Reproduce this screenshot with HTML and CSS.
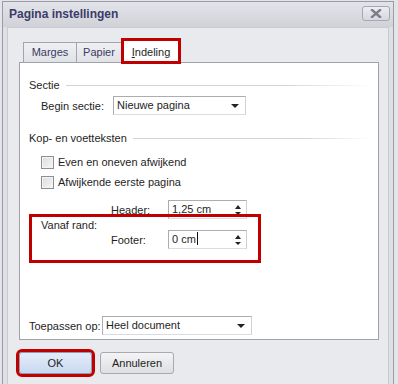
FILE: index.html
```html
<!DOCTYPE html>
<html lang="nl">
<head>
  <meta charset="UTF-8" />
  <title>Pagina instellingen</title>
  <link rel="stylesheet" href="styles.css">
</head>
<body>

  <div class="dialog">
    <div class="titlebar">
      <span class="title">Pagina instellingen</span>
      <button class="close">
        <svg width="12" height="9" viewBox="0 0 12 9"><path d="M2 1 L10 8 M10 1 L2 8" stroke="#7b7e89" stroke-width="2.4" stroke-linecap="square"/></svg>
      </button>
    </div>

    <div class="content">
      <div class="tabs">
        <div class="tab tab-marges">Marges</div>
        <div class="tab tab-papier">Papier</div>
        <div class="tab tab-indeling active"><u>I</u>ndeling</div>
      </div>

      <div class="panel">
        <div class="group-title"><span>Sectie</span></div>
        <div class="row indent begin-row">
          <label class="lbl-begin">Begin sectie:</label>
          <div class="select select-begin">Nieuwe pagina<span class="arrow"></span></div>
        </div>

        <div class="group-title kop"><span>Kop- en voetteksten</span></div>
        <label class="check indent check-1"><span class="box"></span>Even en oneven afwijkend</label>
        <label class="check indent check-2"><span class="box"></span>Afwijkende eerste pagina</label>

        <div class="offsets indent">
          <span class="vanaf">Vanaf rand:</span>
          <span class="lbl-off">Header:</span>
          <div class="spin">1,25 cm<span class="up"></span><span class="down"></span></div>
          <span class="lbl-off">Footer:</span>
          <div class="spin">0 cm<span class="caret"></span><span class="up"></span><span class="down"></span></div>
        </div>

        <div class="row apply-row">
          <label class="lbl-apply">Toepassen op:</label>
          <div class="select select-apply">Heel document<span class="arrow"></span></div>
        </div>
      </div>

      <div class="buttons">
        <button class="btn btn-ok">OK</button>
        <button class="btn">Annuleren</button>
      </div>
    </div>
  </div>

</body>
</html>
```

FILE: styles.css
```css
body {
  margin: 0;
  background: #e3e5ea;
  font-family: 'Liberation Sans', Arial, sans-serif;
  font-size: 11px;
  color: #1e1e1e;
  height: 384px;
  overflow: hidden;
}
.dialog {
  margin: 1px 0 0 2px;
  width: 392px;
  height: 383px;
  box-sizing: border-box;
  border: 1px solid #9a9ba6;
  border-bottom: none;
  background: #dfe0e5;
  padding: 0 4px;
  display: flex;
  flex-direction: column;
}
.titlebar {
  height: 25px;
  flex-shrink: 0;
  display: flex;
  justify-content: space-between;
  align-items: flex-start;
  margin: 0 -4px;
  padding: 0 3px 0 6px;
  background: linear-gradient(#e3e4e9, #d0d2d8);
}
.title {
  font-size: 12px;
  font-weight: bold;
  color: #3b3c6a;
  line-height: 25px;
}
.close {
  margin-top: 4px;
  width: 28px;
  height: 15px;
  padding: 0;
  border: 1px solid #a7a9b2;
  border-radius: 3px;
  background: linear-gradient(#eceef1, #d6d8de);
  display: flex;
  justify-content: center;
  align-items: center;
}
.content {
  flex: 1;
  border: 1px solid #c9cad1;
  border-bottom: none;
  background: #e9eaee;
  padding: 11px 9px 0 11px;
}

/* tabs */
.tabs {
  display: flex;
  align-items: flex-end;
  margin-left: 4px;
  height: 23px;
}
.tab {
  box-sizing: border-box;
  height: 20px;
  border: 1px solid #a3a4ad;
  border-bottom: none;
  background: linear-gradient(#f0f0f3, #e1e2e7);
  color: #3a3b62;
  text-align: center;
  line-height: 19px;
}
.tab-marges { width: 54px; }
.tab-papier { width: 45px; border-left: none; }
.tab-indeling { width: 58px; }
.tab.active {
  height: 24px;
  margin-bottom: -1px;
  background: #fff;
  color: #1e1e1e;
  line-height: 25px;
  position: relative;
  z-index: 1;
  outline: 3px solid #c00000;
  outline-offset: -2px;
}

.panel {
  width: 360px;
  height: 278px;
  box-sizing: border-box;
  border: 1px solid #a0a2aa;
  background: #fff;
  padding: 15px 0 4px 9px;
  display: flex;
  flex-direction: column;
}
.group-title {
  display: flex;
  align-items: center;
  line-height: 14px;
  margin-right: 6px;
}
.group-title::after {
  content: "";
  flex: 1;
  height: 1px;
  margin-left: 6px;
  background: linear-gradient(90deg, #d2d3d6 70%, #fff);
}
.group-title.kop { margin-top: 16px; }
.indent { margin-left: 12px; }

.row {
  display: flex;
  align-items: center;
}
.begin-row { margin-top: 4px; }
.lbl-begin { width: 72px; }
.lbl-apply { width: 73px; }
.apply-row { margin-top: auto; }

.select {
  box-sizing: border-box;
  height: 19px;
  border: 1px solid #abadb3;
  border-right-color: #cfd1d6;
  border-bottom-color: #dadce2;
  padding-left: 3px;
  line-height: 17px;
  position: relative;
}
.select-begin { width: 133px; }
.select-apply { width: 150px; }
.arrow {
  position: absolute;
  right: 6px;
  top: 7px;
  border-left: 4px solid transparent;
  border-right: 4px solid transparent;
  border-top: 4px solid #222;
}

.check {
  display: flex;
  align-items: center;
  height: 14px;
  line-height: 14px;
}
.check-1 { margin-top: 10px; }
.check-2 { margin-top: 6px; }
.box {
  box-sizing: border-box;
  width: 13px;
  height: 13px;
  border: 1px solid #8e8f92;
  background: linear-gradient(135deg, #dcdcdc, #f7f7f7);
  box-shadow: inset 0 0 0 1px #f4f4f4;
  margin-right: 4px;
}

.offsets {
  margin-top: 11px;
  display: grid;
  grid-template-columns: 70px 57px 79px;
  grid-template-rows: 19px 19px;
  row-gap: 11px;
  align-items: center;
  position: relative;
}
.vanaf {
  grid-row: 1 / 3;
  grid-column: 1;
}
.spin {
  box-sizing: border-box;
  height: 19px;
  border: 1px solid #abadb3;
  border-right-color: #cfd1d6;
  border-bottom-color: #dadce2;
  padding-left: 3px;
  line-height: 17px;
  position: relative;
}
.spin .up, .spin .down {
  position: absolute;
  right: 5px;
  border-left: 3.5px solid transparent;
  border-right: 3.5px solid transparent;
}
.spin .up { top: 4px; border-bottom: 4px solid #222; }
.spin .down { top: 11px; border-top: 3px solid #222; }
.caret {
  display: inline-block;
  width: 1px;
  height: 13px;
  background: #111;
  vertical-align: -2px;
  margin-left: 1px;
}
.offsets::after {
  content: "";
  position: absolute;
  left: -12px;
  top: 14px;
  width: 232px;
  height: 49px;
  box-sizing: border-box;
  border: 3px solid #c00000;
}

.buttons {
  display: flex;
  gap: 8px;
  margin-top: 12px;
}
.btn {
  width: 74px;
  height: 22px;
  padding: 0;
  border: 1px solid #a8a9b0;
  border-radius: 3px;
  background: linear-gradient(#f4f4f5, #dedfe2);
  font-family: 'Liberation Sans', Arial, sans-serif;
  font-size: 11px;
  color: #1e1e1e;
}
.btn-ok {
  width: 73px;
  border-color: #8f9cb4;
  background: linear-gradient(#e4ecf9, #c9d8f1);
  outline: 3px solid #c00000;
  outline-offset: 0;
}
```
